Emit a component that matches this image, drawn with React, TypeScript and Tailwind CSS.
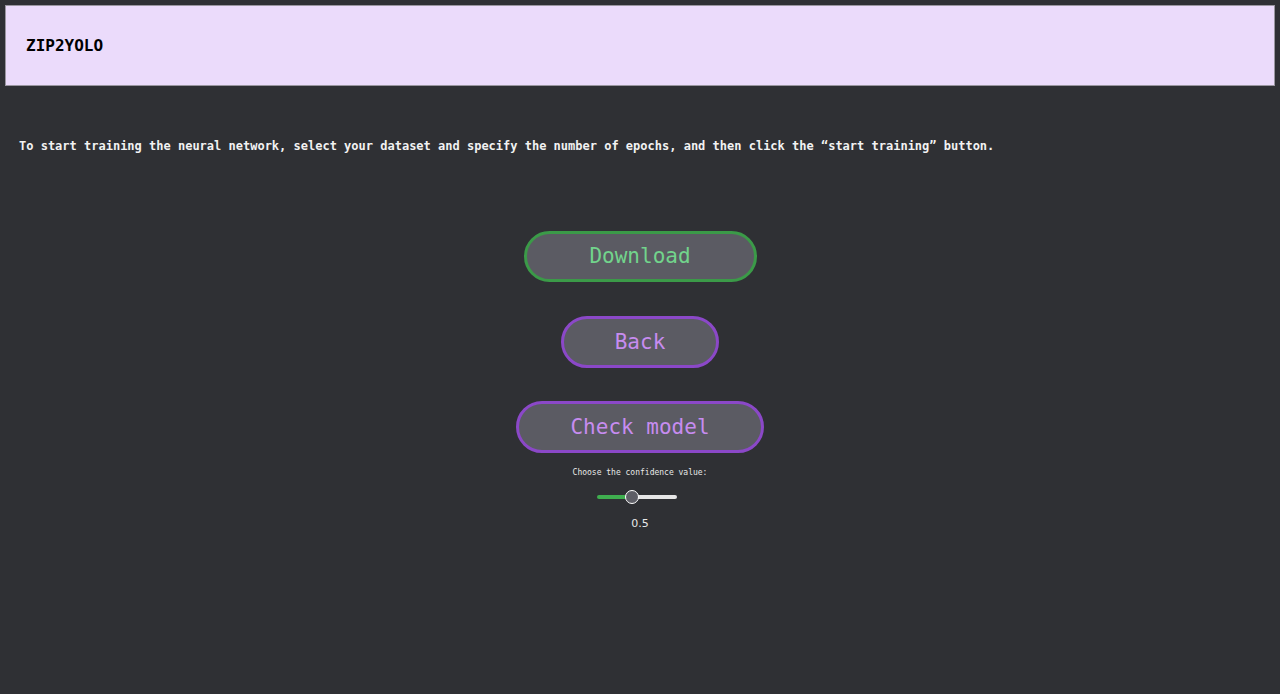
import React from "react";

export default function App() {
  const mono = { fontFamily: '"DejaVu Sans Mono", monospace' };
  return (
    <div className="min-h-[694px] w-full bg-[#2f3034] pt-[5px]" style={mono}>
      <header className="mx-[5px] flex h-[81px] items-center border border-[#9a96a0] bg-[#ebdbfb] pl-[20px]">
        <h1 className="text-[16px] font-bold text-black">ZIP2YOLO</h1>
      </header>
      <p className="mt-[53px] pl-[19px] text-[12px] font-bold leading-[15px] text-[#f2f2f2]">
        To start training the neural network, select your dataset and specify the number of epochs, and then click the “start training” button.
      </p>
      <div className="mt-[77px] flex flex-col items-center">
        <button className="flex h-[51px] w-[233px] items-center justify-center rounded-full border-[3px] border-[#3b9a48] bg-[#5b5b63] pt-[1px] text-[21px] text-[#72d48c]" style={mono}>
          Download
        </button>
        <button className="mt-[34px] flex h-[52px] w-[158px] items-center justify-center rounded-full border-[3px] border-[#8b48c8] bg-[#5b5b63] pt-[1px] text-[21px] text-[#c78cf0]" style={mono}>
          Back
        </button>
        <button className="mt-[33px] flex h-[52px] w-[248px] items-center justify-center rounded-full border-[3px] border-[#8b48c8] bg-[#5b5b63] pt-[1px] text-[21px] text-[#c78cf0]" style={mono}>
          Check model
        </button>
        <div className="mt-[15px] text-[8px] leading-[10px] text-[#e8e8e8]">Choose the confidence value:</div>
        <div className="relative -ml-[7px] mt-[11px] h-[16px] w-[80px]">
          <div className="absolute left-0 top-[6px] h-[4px] w-[36px] rounded-l-full bg-[#3fae4f]" />
          <div className="absolute right-0 top-[6px] h-[4px] w-[44px] rounded-r-full bg-[#e6e6e6]" />
          <div className="absolute left-[28px] top-[1px] h-[14px] w-[14px] rounded-full border-[1.5px] border-white bg-[#5e5e66]" />
        </div>
        <div className="mt-[12px] text-[11px] leading-[13px] text-[#e8e8e8]" style={{ fontFamily: '"DejaVu Sans", sans-serif' }}>
          0.5
        </div>
      </div>
    </div>
  );
}
